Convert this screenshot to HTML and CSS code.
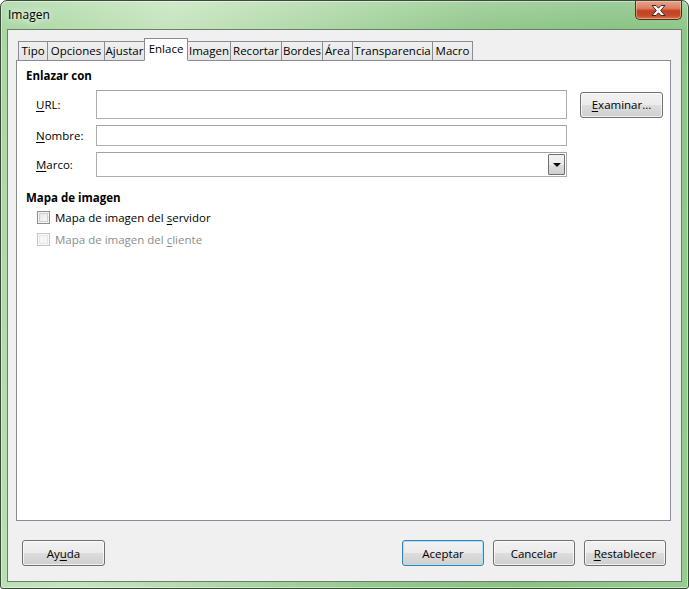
FILE: index.html
```html
<!DOCTYPE html>
<html lang="es">
<head>
<meta charset="utf-8">
<title>Imagen</title>
<link rel="stylesheet" href="styles.css">
</head>
<body>
<div class="window">
  <div class="titlebar">
    <span class="title">Imagen</span>
    <div class="close">
      <svg width="15" height="11" viewBox="0 0 15 11">
        <path d="M1 0.5 H5 L7.5 3.2 L10 0.5 H14 L9.6 5.5 L14 10.5 H10 L7.5 7.8 L5 10.5 H1 L5.4 5.5 Z" fill="#fff" stroke="#3a2a2a" stroke-width="1" stroke-linejoin="round"/>
      </svg>
    </div>
  </div>
  <div class="client">
    <div class="tabs">
      <div class="tab w-tipo">Tipo</div>
      <div class="tab w-opciones">Opciones</div>
      <div class="tab w-ajustar">Ajustar</div>
      <div class="tab tab-active w-enlace">Enlace</div>
      <div class="tab w-imagen">Imagen</div>
      <div class="tab w-recortar">Recortar</div>
      <div class="tab w-bordes">Bordes</div>
      <div class="tab w-area">Área</div>
      <div class="tab w-transp">Transparencia</div>
      <div class="tab w-macro">Macro</div>
    </div>
    <div class="panel">
      <div class="group-title">Enlazar con</div>
      <div class="row row-url">
        <span class="label"><u>U</u>RL:</span>
        <div class="input input-url"></div>
        <div class="btn btn-browse"><u>E</u>xaminar...</div>
      </div>
      <div class="row row-name">
        <span class="label"><u>N</u>ombre:</span>
        <div class="input input-name"></div>
      </div>
      <div class="row row-frame">
        <span class="label"><u>M</u>arco:</span>
        <div class="input combo">
          <div class="combo-btn"><span class="arrow"></span></div>
        </div>
      </div>
      <div class="group-title group-map">Mapa de imagen</div>
      <div class="check-row">
        <span class="checkbox"></span>
        <span class="check-label">Mapa de imagen del <u>s</u>ervidor</span>
      </div>
      <div class="check-row disabled">
        <span class="checkbox"></span>
        <span class="check-label">Mapa de imagen del <u>c</u>liente</span>
      </div>
    </div>
    <div class="footer">
      <div class="btn btn-foot">Ay<u>u</u>da</div>
      <div class="footer-right">
        <div class="btn btn-foot btn-default">Aceptar</div>
        <div class="btn btn-foot">Cancelar</div>
        <div class="btn btn-foot"><u>R</u>establecer</div>
      </div>
    </div>
  </div>
</div>
</body>
</html>
```

FILE: styles.css
```css
* { box-sizing: border-box; }

html, body {
  margin: 0;
  padding: 0;
  background: #ffffff;
}

body {
  font-family: "Open Sans", "Noto Sans", sans-serif;
  font-size: 11.5px;
  color: #000;
}

u { text-decoration: underline; text-underline-offset: 2px; }

.window {
  width: 689px;
  height: 589px;
  border: 1px solid #3c4a3c;
  border-radius: 7px 7px 3px 3px;
  background:
    linear-gradient(to bottom, rgba(255,255,255,0.18), rgba(255,255,255,0) 30px),
    linear-gradient(100deg, #a9d6a2 0%, #c5e5bd 22%, #b2d9ab 38%, #93c98d 60%, #88c383 78%, #96cc90 100%);
  box-shadow: inset 0 0 0 1px rgba(255,255,255,0.45);
  padding: 0 6px 6px 6px;
  display: flex;
  flex-direction: column;
}

.titlebar {
  height: 28px;
  display: flex;
  justify-content: space-between;
  align-items: flex-start;
}

.title {
  margin-top: 6px;
  margin-left: 1px;
  font-size: 12px;
  line-height: 16px;
  color: #000;
  text-shadow: 0 0 6px rgba(255,255,255,0.95), 0 0 10px rgba(255,255,255,0.8);
}

.close {
  width: 47px;
  height: 19px;
  border: 1px solid #5b2a22;
  border-top: none;
  border-radius: 0 0 5px 5px;
  background: linear-gradient(to bottom, #e9a28d 0%, #dc8064 40%, #c3401f 55%, #c44a2a 80%, #d8734f 100%);
  box-shadow: inset 0 0 0 1px rgba(255,220,200,0.45);
  display: flex;
  align-items: center;
  justify-content: center;
}

.close svg { display: block; margin-top: 1px; }

.client {
  flex: 1;
  background: #f0f0f0;
  border: 1px solid #6b7d6b;
  padding: 8px 10px 0 8px;
  display: flex;
  flex-direction: column;
}

/* Tabs */
.tabs {
  height: 23px;
  margin-bottom: -1px;
  padding-left: 2px;
  display: flex;
  align-items: flex-end;
  position: relative;
  z-index: 1;
}

.tab {
  height: 20px;
  margin-left: -1px;
  border: 1px solid #898c95;
  background: linear-gradient(to bottom, #f0f0f0, #e4e4e4);
  text-align: center;
  line-height: 17px;
  white-space: nowrap;
  font-size: 11.5px;
}

.tab:first-child { margin-left: 0; }

.tab-active {
  height: 23px;
  background: #ffffff;
  border-bottom: 1px solid #ffffff;
  line-height: 19px;
  position: relative;
  z-index: 2;
  padding-bottom: 2px;
}

.w-tipo { width: 30px; }
.w-opciones { width: 58px; }
.w-ajustar { width: 41px; }
.w-enlace { width: 44px; }
.w-imagen { width: 44px; }
.w-recortar { width: 52px; }
.w-bordes { width: 42px; }
.w-area { width: 31px; }
.w-transp { width: 81px; }
.w-macro { width: 41px; }

/* Panel */
.panel {
  height: 461px;
  background: #ffffff;
  border: 1px solid #898c95;
  padding: 7px 0 0 9px;
}

.group-title {
  font-weight: bold;
  line-height: 16px;
  font-size: 11.5px;
}

.group-map { margin-top: 13px; }

.row {
  display: flex;
  align-items: center;
  padding-left: 10px;
}

.row-url { margin-top: 6px; }
.row-name { margin-top: 6px; }
.row-frame { margin-top: 6px; }

.label {
  width: 60px;
  flex: none;
}

.input {
  background: #ffffff;
  border: 1px solid #abadb3;
  border-top-color: #a0a2a8;
  width: 471px;
  flex: none;
}

.input-url { height: 29px; }
.input-name { height: 21px; }

.combo {
  height: 25px;
  display: flex;
  justify-content: flex-end;
  align-items: stretch;
  padding: 1px;
}

.combo-btn {
  width: 17px;
  border: 1px solid #707070;
  border-radius: 1px;
  background: linear-gradient(to bottom, #f2f2f2 0%, #ebebeb 50%, #dddddd 51%, #cfcfcf 100%);
  display: flex;
  align-items: center;
  justify-content: center;
}

.arrow {
  width: 0;
  height: 0;
  border-left: 4px solid transparent;
  border-right: 4px solid transparent;
  border-top: 4px solid #000;
  margin-top: 1px;
}

.btn {
  height: 26px;
  border: 1px solid #707070;
  border-radius: 3px;
  background: linear-gradient(to bottom, #f2f2f2 0%, #ebebeb 50%, #dddddd 51%, #cfcfcf 100%);
  box-shadow: inset 0 0 0 1px rgba(255,255,255,0.7);
  display: flex;
  align-items: center;
  justify-content: center;
  white-space: nowrap;
  font-size: 11.5px;
}

.btn-browse {
  width: 83px;
  margin-left: 13px;
}

/* Checkboxes */
.check-row {
  display: flex;
  align-items: center;
  height: 22px;
  padding-left: 11px;
}

.checkbox {
  width: 13px;
  height: 13px;
  border: 1px solid #8e8f8f;
  background: linear-gradient(135deg, #dcdcdc 0%, #f4f4f4 60%, #ffffff 100%);
  box-shadow: inset 0 0 0 1px #f4f4f4, inset 0 0 0 2px #cfcfcf;
  margin-right: 5px;
  flex: none;
}

.check-row.disabled { color: #8d8d8d; }
.check-row.disabled .checkbox {
  border-color: #c6c6c6;
  background: #f6f6f6;
  box-shadow: inset 0 0 0 1px #fafafa, inset 0 0 0 2px #e6e6e6;
}

/* Footer */
.footer {
  margin-top: 19px;
  padding-left: 6px;
  padding-right: 5px;
  display: flex;
  justify-content: space-between;
}

.footer-right {
  display: flex;
  gap: 9px;
}

.btn-foot { width: 83px; }
.footer-right .btn-foot { width: 82px; }

.btn-default {
  border-color: #3c7fb1;
  box-shadow: inset 0 0 0 1px #a9e3f9;
}
```
